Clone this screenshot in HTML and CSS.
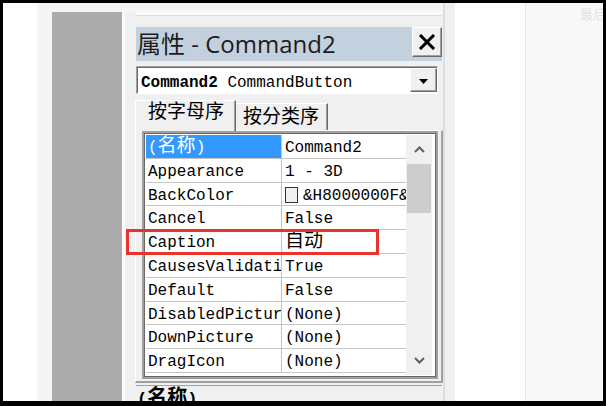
FILE: index.html
```html
<!DOCTYPE html>
<html lang="zh-CN">
<head>
<meta charset="utf-8">
<title>属性 - Command2</title>
<link rel="stylesheet" href="styles.css">
</head>
<body>
<div class="screen">
  <div class="margin-white"></div>
  <div class="workspace">
    <div class="form-gray"></div>
    <div class="panel">
      <div class="panel-clip"></div>
      <div class="titlebar">
        <span class="title-text">属性 - Command2</span>
        <button class="close-btn" aria-label="关闭">
          <svg width="18" height="16" viewBox="0 0 18 16"><path d="M2 1 L16 15 M16 1 L2 15" stroke="#000" stroke-width="3" fill="none"/></svg>
        </button>
      </div>
      <div class="combo">
        <span class="combo-text"><b>Command2</b> CommandButton</span>
        <span class="combo-btn"><svg width="9" height="5" viewBox="0 0 9 5"><path d="M0 0H9L4.5 5Z" fill="#000"/></svg></span>
      </div>
      <div class="tabs">
        <div class="tab active">按字母序</div>
        <div class="tab inactive">按分类序</div>
      </div>
      <div class="tab-page">
        <div class="grid-frame">
          <div class="grid">
            <div class="rows">
              <div class="row selected"><span class="name">(<span class="cjk">名称</span>)</span><span class="value">Command2</span></div>
              <div class="row"><span class="name">Appearance</span><span class="value">1 - 3D</span></div>
              <div class="row"><span class="name">BackColor</span><span class="value"><span class="swatch"></span>&amp;H8000000F&amp;</span></div>
              <div class="row"><span class="name">Cancel</span><span class="value">False</span></div>
              <div class="row"><span class="name">Caption</span><span class="value"><span class="cjk">自动</span></span></div>
              <div class="row"><span class="name">CausesValidation</span><span class="value">True</span></div>
              <div class="row"><span class="name">Default</span><span class="value">False</span></div>
              <div class="row"><span class="name">DisabledPicture</span><span class="value">(None)</span></div>
              <div class="row"><span class="name">DownPicture</span><span class="value">(None)</span></div>
              <div class="row"><span class="name">DragIcon</span><span class="value">(None)</span></div>
            </div>
            <div class="scrollbar">
              <div class="sb-arrow"><svg width="11" height="7" viewBox="0 0 11 7"><path d="M1 6 L5.5 1.5 L10 6" stroke="#606060" stroke-width="2" fill="none"/></svg></div>
              <div class="sb-thumb"></div>
              <div class="sb-track"></div>
              <div class="sb-arrow"><svg width="11" height="7" viewBox="0 0 11 7"><path d="M1 1 L5.5 5.5 L10 1" stroke="#606060" stroke-width="2" fill="none"/></svg></div>
            </div>
          </div>
        </div>
      </div>
      <div class="desc"><b>(<span class="cjk">名称</span>)</b></div>
    </div>
    <div class="panel-edge"></div>
  </div>
  <div class="white-col"></div>
  <div class="side-pane"><span class="ghost">最后修改</span></div>
  <div class="annotation"></div>
</div>
</body>
</html>
```
FILE: styles.css
```css
* { box-sizing: border-box; }
html, body { margin: 0; padding: 0; }
body {
  background: #000;
  width: 606px;
  height: 406px;
  overflow: hidden;
  font-family: "Liberation Mono", "Noto Sans CJK SC", monospace;
  font-size: 16px;
  color: #000;
}
.screen {
  position: relative;
  display: flex;
  width: 600px;
  height: 398px;
  margin: 3px 3px 5px 3px;
  overflow: hidden;
}
.margin-white { width: 34px; flex: none; background: #fff; }
.workspace {
  width: 418px;
  flex: none;
  display: flex;
  padding-left: 15px;
  background: #f5f5f5;
}
.form-gray { width: 70px; flex: none; margin-top: 9px; background: #acacac; }
.panel {
  width: 321px;
  flex: none;
  margin-top: 9px;
  background: #f0f0f0;
  border-left: 3px solid #fafafa;
  padding: 0 1px 0 11px;
  display: flex;
  flex-direction: column;
  overflow: hidden;
}
.panel-edge { width: 12px; flex: none; border-left: 2px solid #dedede; background: #f0f0f0; }
.white-col { width: 71px; flex: none; background: #fff; border-right: 1px solid #e6e6e6; }
.side-pane {
  width: 77px;
  flex: none;
  background: #f8f8f8;
  padding: 3px 0 0 54px;
  overflow: hidden;
  white-space: nowrap;
}
.ghost { font-family: "Noto Sans CJK SC", sans-serif; font-size: 13px; line-height: 16px; color: #e3e3e3; }

.panel-clip { height: 4px; flex: none; background: #fafafa; border-bottom: 1px solid #e0e0e0; margin-bottom: 11px; }

.titlebar {
  height: 34px;
  flex: none;
  background: #c3d1df;
  display: flex;
  justify-content: space-between;
  align-items: flex-start;
}
.title-text {
  font-family: "Open Sans", "Noto Sans CJK SC", sans-serif;
  font-size: 24px;
  line-height: 34px;
  color: #1c1c1c;
  padding-left: 1px;
  white-space: nowrap;
}
.close-btn {
  width: 30px;
  height: 30px;
  padding: 0;
  margin: 0;
  background: #f0f0f0;
  border: 1px solid;
  border-color: #fff #6a6a6a #6a6a6a #fff;
  box-shadow: inset -1px -1px 0 #a0a0a0;
  display: flex;
  align-items: center;
  justify-content: center;
}

.combo {
  margin-top: 5px;
  width: 302px;
  height: 28px;
  flex: none;
  background: #fff;
  border: 1px solid;
  border-color: #a0a0a0 #fff #fff #a0a0a0;
  box-shadow: inset 1px 1px 0 #696969;
  display: flex;
  justify-content: space-between;
  align-items: flex-start;
  padding-left: 4px;
}
.combo-text { padding-top: 6px; line-height: 20px; white-space: nowrap; }
.combo-btn {
  width: 27px;
  height: 24px;
  margin-top: 1px;
  background: #f0f0f0;
  border: 1px solid;
  border-color: #fff #696969 #696969 #fff;
  box-shadow: inset -1px -1px 0 #a0a0a0;
  display: flex;
  align-items: center;
  justify-content: center;
  padding-top: 3px;
}

.tabs {
  margin-top: 6px;
  margin-left: -1px;
  height: 30px;
  flex: none;
  display: flex;
  align-items: flex-end;
  position: relative;
  z-index: 1;
}
.tab {
  font-family: "Noto Sans CJK SC", sans-serif;
  font-size: 19px;
  color: #000;
  background: #f0f0f0;
  border-top: 1px solid #fff;
  border-right: 1px solid #696969;
  box-shadow: inset -1px 0 0 #a0a0a0;
  white-space: nowrap;
}
.tab.active {
  height: 31px;
  margin-bottom: -1px;
  border-left: 1px solid #fff;
  line-height: 18px;
  padding: 0 11px 0 12px;
}
.tab.inactive {
  height: 27px;
  line-height: 22px;
  padding: 0 8px 0 7px;
}

.tab-page {
  flex: none;
  margin: 0 -1px;
  border-top: 1px solid #fff;
  border-left: 1px solid #fff;
  border-right: 2px solid #a0a0a0;
  border-bottom: 2px solid #a0a0a0;
  padding: 0 3px 2px 6px;
}
.grid-frame {
  border: 2px solid #a0a0a0;
  box-shadow: inset 1px 1px 0 #696969, inset -1px -1px 0 #696969;
  padding: 2px 4px 2px 2px;
  background: #fff;
}
.grid { display: flex; height: 240px; }
.rows { width: 260px; flex: none; background: #fff; }
.row {
  display: flex;
  height: 23.8px;
  border-bottom: 1px solid #c4c4c4;
  line-height: 19px;
  white-space: nowrap;
}
.name {
  width: 136px;
  flex: none;
  overflow: hidden;
  padding: 4px 0 0 2px;
  border-right: 1px solid #c4c4c4;
}
.value {
  flex: 1;
  overflow: hidden;
  padding: 4px 0 0 3px;
}
.row.selected .name { background: #3399ff; color: #fff; }
.cjk { font-family: "Noto Sans CJK SC", sans-serif; font-size: 19px; line-height: 0; }
.swatch {
  display: inline-block;
  width: 13px;
  height: 16px;
  border: 1px solid #333;
  background: #f0f0f0;
  vertical-align: -3px;
  margin-right: 5px;
}

.scrollbar {
  width: 26px;
  flex: none;
  background: #f0f0f0;
  display: flex;
  flex-direction: column;
}
.sb-arrow { height: 29px; flex: none; display: flex; align-items: center; justify-content: center; }
.sb-thumb { height: 49px; flex: none; margin: 0 1px; background: #cdcdcd; }
.sb-track { flex: 1; }

.desc {
  flex: 1;
  margin-top: 2px;
  border-top: 1px solid #a0a0a0;
  padding: 3px 0 0 1px;
  line-height: 22px;
  font-size: 17px;
}
.desc .cjk { font-size: 20px; }

.annotation {
  position: absolute;
  left: 123px;
  top: 226px;
  width: 253px;
  height: 26px;
  border: 3px solid #e8342c;
}
```
